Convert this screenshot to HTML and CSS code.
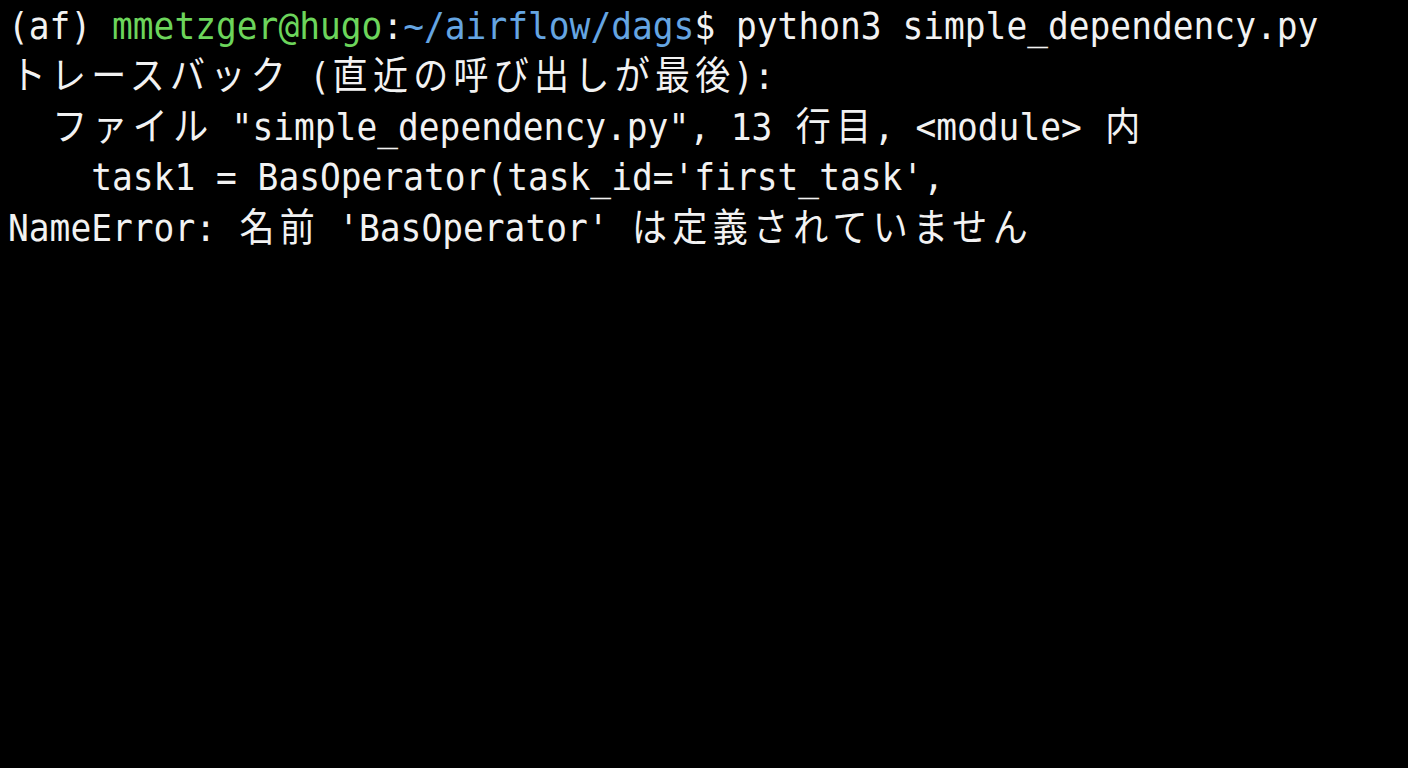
FILE: index.html
```html
<!DOCTYPE html>
<html lang="ja">
<head>
<meta charset="utf-8">
<title>Terminal</title>
<link rel="stylesheet" href="styles.css">
</head>
<body>
<div class="term">
<div class="line">(af) <span class="user">mmetzger@hugo</span>:<span class="path">~/airflow/dags</span>$ python3 simple_dependency.py</div>
<div class="line"><span class="jp">トレースバック</span> (<span class="jp">直近の呼び出しが最後</span>):</div>
<div class="line">  <span class="jp">ファイル</span> "simple_dependency.py", 13 <span class="jp">行目</span>, &lt;module&gt; <span class="jp">内</span></div>
<div class="line">    task1 = BasOperator(task_id='first_task',</div>
<div class="line">NameError: <span class="jp">名前</span> 'BasOperator' <span class="jp">は定義されていません</span></div>
</div>
</body>
</html>
```

FILE: styles.css
```css
html, body {
  margin: 0;
  padding: 0;
  background: #000;
  height: 100%;
  overflow: hidden;
}

.term {
  padding: 0 0 0 8px;
  font-family: "DejaVu Sans Mono", "Noto Sans CJK JP", monospace;
  font-size: 34.55px;
  color: #f2f2f2;
  transform: scaleY(1.1);
  transform-origin: 0 0;
}

.line {
  white-space: pre;
  height: 46px;
  line-height: 46px;
}

.user {
  color: #6cd55b;
}

.path {
  color: #65a5e2;
}

.jp {
  font-family: "Noto Sans CJK JP", sans-serif;
  font-size: 35px;
  line-height: 0;
  letter-spacing: 5.3px;
  padding-left: 2.65px;
  margin-right: -2.65px;
}
```
